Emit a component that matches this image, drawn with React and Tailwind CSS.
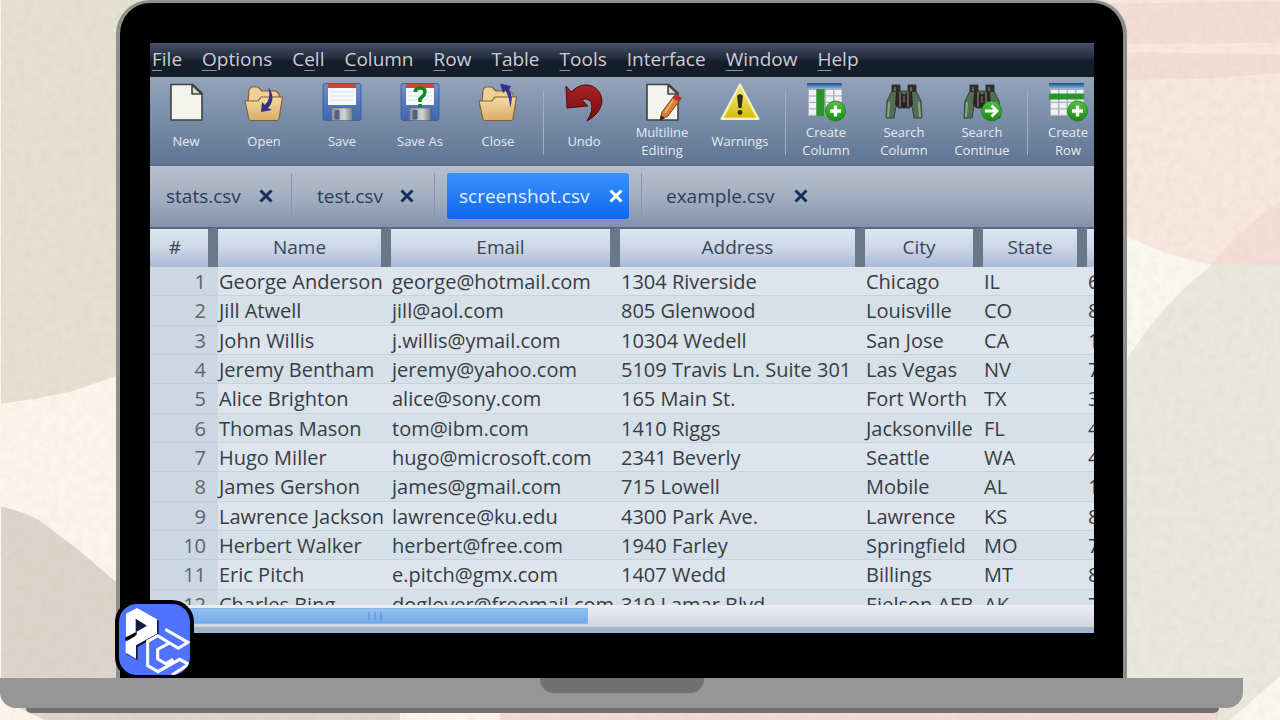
import React from "react";

const menu = [
  ["", "F", "ile"],
  ["", "O", "ptions"],
  ["C", "e", "ll"],
  ["", "C", "olumn"],
  ["", "R", "ow"],
  ["T", "a", "ble"],
  ["", "T", "ools"],
  ["", "I", "nterface"],
  ["", "W", "indow"],
  ["", "H", "elp"],
];

const rows = [
  ["George Anderson", "george@hotmail.com", "1304 Riverside", "Chicago", "IL", "6"],
  ["Jill Atwell", "jill@aol.com", "805 Glenwood", "Louisville", "CO", "8"],
  ["John Willis", "j.willis@ymail.com", "10304 Wedell", "San Jose", "CA", "1"],
  ["Jeremy Bentham", "jeremy@yahoo.com", "5109 Travis Ln. Suite 301", "Las Vegas", "NV", "7"],
  ["Alice Brighton", "alice@sony.com", "165 Main St.", "Fort Worth", "TX", "3"],
  ["Thomas Mason", "tom@ibm.com", "1410 Riggs", "Jacksonville", "FL", "4"],
  ["Hugo Miller", "hugo@microsoft.com", "2341 Beverly", "Seattle", "WA", "4"],
  ["James Gershon", "james@gmail.com", "715 Lowell", "Mobile", "AL", "1"],
  ["Lawrence Jackson", "lawrence@ku.edu", "4300 Park Ave.", "Lawrence", "KS", "8"],
  ["Herbert Walker", "herbert@free.com", "1940 Farley", "Springfield", "MO", "7"],
  ["Eric Pitch", "e.pitch@gmx.com", "1407 Wedd", "Billings", "MT", "8"],
  ["Charles Bing", "doglover@freemail.com", "319 Lamar Blvd", "Eielson AFB", "AK", "7"],
];

function Icon({ children }) {
  return (
    <svg viewBox="0 0 40 40" className="size-10 shrink-0" aria-hidden="true">
      {children}
    </svg>
  );
}

function Paper() {
  return (
    <>
      <path d="M5 1.500H27L36 10V37H5Z" fill="#f4f4ee" stroke="#3f423f" strokeWidth="1.6" strokeLinejoin="round" />
      <path d="M26 2V11H35.500Z" fill="#d5d8d3" stroke="#3f423f" strokeWidth="1.6" strokeLinejoin="round" />
    </>
  );
}

function Folder() {
  return (
    <>
      <path d="M4 19L5 7L7 4H14L18 8H32L35 11V20Z" fill="#efcf94" stroke="#80603a" strokeWidth="1.2" strokeLinejoin="round" />
      <path d="M1 18H14L17 14H38.500L35 36Q35 37.500 33 37.500H6.500Q5 37.500 4.800 36Z" fill="url(#folder)" stroke="#80603a" strokeWidth="1.2" strokeLinejoin="round" />
    </>
  );
}

function Floppy() {
  return (
    <>
      <rect x="1" y="0.500" width="38" height="37" rx="2" fill="url(#floppy)" stroke="#41619c" />
      <rect x="6" y="1" width="28" height="21" fill="#f7f8fb" />
      <rect x="6" y="1" width="28" height="4" fill="#c8473f" />
      <path d="M8 9H32M8 13H32M8 17H32" stroke="#dfe3ee" strokeWidth="1" />
      <rect x="9.500" y="25" width="21" height="12.500" fill="url(#metal)" stroke="#5e6878" strokeWidth="0.600" />
      <rect x="12.500" y="27" width="5" height="9.500" fill="#53627c" />
    </>
  );
}

function Binoculars() {
  return (
    <>
      <path d="M8 2H16V8H24V2H32V8L37 18L38 35H30L28 23L25 25H15L12 23L10 35H2L3 18L8 8Z" fill="#536f55" stroke="#31443a" strokeWidth="1" strokeLinejoin="round" />
      <path d="M8 2H16V9H8ZM24 2H32V9H24Z" fill="#302d2c" />
      <path d="M12 9H17L20 12L23 9H28L29 22L25 25H15L11 22Z" fill="#292625" />
      <path d="M16 9V24M24 9V24M11 4V8M27 4V8" stroke="#7c7973" strokeWidth="1.400" />
      <path d="M5 19L4 34M35 19L36 34" stroke="#8fa981" strokeWidth="2" />
      <path d="M19 13H21V20H19Z" fill="#55504d" />
    </>
  );
}

function Badge({ arrow }) {
  return (
    <>
      <circle cx="29.500" cy="28" r="10" fill="url(#green)" stroke="#1d7b16" strokeWidth="0.800" />
      {arrow ? (
        <path d="M23 28H35M29.500 22.500L35 28L29.500 33.500" fill="none" stroke="#fff" strokeWidth="2.800" />
      ) : (
        <path d="M29.500 22.500V33.500M24 28H35" stroke="#fff" strokeWidth="3.400" />
      )}
    </>
  );
}

function Grid({ row }) {
  return (
    <>
      <rect x="2" y="0" width="34" height="33" fill="#a9b2bd" />
      <rect x="1" y="0" width="35" height="5.500" fill="url(#gridHead)" />
      {[7, 13.5, 20, 26.5].map((y) =>
        [3, 11.5, 20, 28.5].map((x) => <rect key={x + "-" + y} x={x} y={y} width="7" height="5.300" fill="#f0f1f2" />)
      )}
      {row ? (
        <path d="M1 10.500H36V16.500H1Z" fill="#25952c" />
      ) : (
        <path d="M10.500 6H18.500V33H10.500Z" fill="#25952c" />
      )}
    </>
  );
}

const icons = {
  paper: <Paper />,
  open: (
    <>
      <Folder />
      <path d="M24 4Q33 15 24 25L28 27L17 29L18 19L21 22Q28 15 24 4Z" fill="#312f87" />
    </>
  ),
  save: <Floppy />,
  saveAs: (
    <>
      <Floppy />
      <path d="M15 9Q16 4 21 5Q27 6 24 12L20 16V19M20 21V24" fill="none" stroke="#12851c" strokeWidth="3.600" />
    </>
  ),
  close: (
    <>
      <Folder />
      <path d="M32 25Q36 13 31 7L33 3L22 0.500L25 10L27.500 7.500Q32 15 32 25Z" fill="#313391" />
    </>
  ),
  undo: (
    <path d="M2 3L7 9Q17 -1 28 3Q38 8 38 19Q36 31 23 38Q30 27 27 19Q23 14 18 17L24 23L3 25Z" fill="url(#red)" stroke="#55090c" strokeWidth="1" strokeLinejoin="round" />
  ),
  multi: (
    <>
      <Paper />
      <path d="M18 37L20 29L32 13L38 17L26 33Z" fill="#d98037" stroke="#774421" strokeWidth="1" />
      <path d="M31 15L33 11L40 15L37 19Z" fill="#b62c2c" />
      <path d="M18 38L19 32L23 35Z" fill="#34281f" />
      <path d="M31 17L23 30" stroke="#f2b06c" strokeWidth="1.500" />
    </>
  ),
  warn: (
    <>
      <path d="M20 1.500L38.500 36H1.500Z" fill="#eed735" stroke="#f3f0ca" strokeWidth="2" strokeLinejoin="round" />
      <path d="M20 5L35 34H5Z" fill="url(#yellow)" />
      <path d="M17 13Q20 9 23 13L21.500 25H18.500Z" fill="#302d16" />
      <circle cx="20" cy="29.500" r="2.400" fill="#302d16" />
    </>
  ),
  createColumn: (
    <>
      <Grid />
      <Badge />
    </>
  ),
  search: <Binoculars />,
  searchNext: (
    <>
      <Binoculars />
      <Badge arrow />
    </>
  ),
  createRow: (
    <>
      <Grid row />
      <Badge />
    </>
  ),
};

const tools = [
  ["paper", "New"],
  ["open", "Open"],
  ["save", "Save"],
  ["saveAs", "Save As"],
  ["close", "Close"],
  null,
  ["undo", "Undo"],
  ["multi", "Multiline Editing"],
  ["warn", "Warnings"],
  null,
  ["createColumn", "Create Column"],
  ["search", "Search Column"],
  ["searchNext", "Search Continue"],
  null,
  ["createRow", "Create Row"],
];

function Gradients() {
  const pairs = [
    ["folder", "#f5dba5", "#d9ad67"],
    ["floppy", "#6c8fc9", "#3f65ad"],
    ["green", "#54c43c", "#168a15"],
    ["gridHead", "#1d4f86", "#79b4dd"],
    ["red", "#a82326", "#74090d"],
    ["yellow", "#f4ea77", "#d5bd0e"],
  ];
  return (
    <svg className="absolute size-0" aria-hidden="true">
      <defs>
        {pairs.map(([id, from, to]) => (
          <linearGradient key={id} id={id} x2="0" y2="1">
            <stop stopColor={from} />
            <stop offset="1" stopColor={to} />
          </linearGradient>
        ))}
        <linearGradient id="metal">
          <stop stopColor="#8b919b" />
          <stop offset="0.600" stopColor="#d5d5d5" />
          <stop offset="1" stopColor="#777d86" />
        </linearGradient>
      </defs>
    </svg>
  );
}

function Backdrop() {
  return (
    <svg className="absolute inset-0 size-full" viewBox="0 0 1280 720" preserveAspectRatio="none" aria-hidden="true">
      <defs>
        <filter id="grain" x="0" y="0" width="1" height="1">
          <feTurbulence type="fractalNoise" baseFrequency="0.120" numOctaves="3" seed="4" />
          <feColorMatrix values="0 0 0 0 0.500  0 0 0 0 0.430  0 0 0 0 0.330  0.500 0 0 0 -0.170" />
        </filter>
      </defs>
      <rect width="1280" height="720" fill="#fbf8f2" />
      <path d="M1 0H640V300L117 376L70 392L35 399L1 404Z" fill="#e4e1d0" />
      <path d="M1 404L35 399L70 392L117 376L640 300V720H1Z" fill="#fdf5ec" />
      <path d="M1 507Q24 511 40 521L80 551L117 583L400 700V720H45L1 700Z" fill="#ddd5cb" />
      <path d="M1280 220Q1170 280 1120 372V720H1230L1280 676Z" fill="#e9e8dc" />
      <path d="M1000 0H1280V265H1212Q1160 254 1128 236L1000 180Z" fill="#f9e7e0" />
      <path d="M1280 202Q1245 225 1210 265H1280Z" fill="#f4dfd7" />
      <path d="M1100 4L1280 1V43L1100 44ZM1100 52L1280 54V73L1200 79L1100 80Z" fill="#f3ddd6" />
      <path d="M500 708H1218V720H500Z" fill="#f1dbd0" />
      <rect width="1280" height="720" filter="url(#grain)" opacity="0.400" />
    </svg>
  );
}

function Cross() {
  return (
    <svg viewBox="0 0 14 14" className="size-3.5" aria-hidden="true">
      <path d="M1.500 1.500L12.500 12.500M12.500 1.500L1.500 12.500" stroke="currentColor" strokeWidth="3" />
    </svg>
  );
}

const tabs = [
  ["stats.csv", "w-[142px] pl-4 pr-[18px] border-r"],
  ["test.csv", "w-[143px] pl-[25px] pr-5 border-r"],
  ["screenshot.csv", "w-[207px] px-3 border-r"],
  ["example.csv", "w-[166px] pl-6"],
];

function Tabs() {
  return (
    <div className="flex h-[61px] shrink-0 border-t border-[#c3ccdb] bg-linear-to-b from-[#b6bfce] via-[#a3afc1] to-[#8291ac] pb-2 pt-1.5 text-[19px]">
      {tabs.map(([name, style], i) => {
        const active = i === 2;
        return (
          <div key={name} className={`flex shrink-0 border-[#8795ab] ${style}`}>
            <div
              className={
                active
                  ? "flex flex-1 items-center justify-between rounded-[3px] bg-linear-to-b from-[#3990ff] to-[#0f68ee] pl-3 pr-1.5 text-[#e3efff]"
                  : "flex flex-1 items-center justify-between text-[#2c3d5c]"
              }
            >
              <button className="pt-px">{name}</button>
              <button aria-label={`Close ${name}`} className={active ? "text-white" : "text-[#142f5c]"}>
                <Cross />
              </button>
            </div>
          </div>
        );
      })}
    </div>
  );
}

function DataTable() {
  return (
    <div className="min-h-0 flex-1 overflow-hidden bg-[#dbe3eb]">
      <table className="h-[392px] w-full table-fixed border-separate border-spacing-0 text-[20px] leading-[26px] text-[#363d46]">
        <colgroup>
          <col className="w-[68px]" />
          <col className="w-[173px]" />
          <col className="w-[229px]" />
          <col className="w-[245px]" />
          <col className="w-[118px]" />
          <col className="w-[104px]" />
          <col />
        </colgroup>
        <thead>
          <tr className="h-10">
            {["#", "Name", "Email", "Address", "City", "State"].map((h) => (
              <th key={h} className="border-r-[10px] border-t-2 border-r-[#6b7789] border-t-[#56637a] bg-linear-to-b from-[#dde5f0] via-[#ccd7e7] to-[#a6b9d6] p-0 pb-0.5 text-[19px] font-normal text-[#3a4553] first:pr-2">
                {h}
              </th>
            ))}
            <th aria-label="Zip" className="border-t-2 border-t-[#56637a] bg-linear-to-b from-[#dde5f0] via-[#ccd7e7] to-[#a6b9d6] p-0" />
          </tr>
        </thead>
        <tbody>
          {rows.map((r, i) => (
            <tr key={r[0]} className="odd:bg-[#dde4ec] even:bg-[#d6e0e7]">
              <td className="border-b border-[#c5ced8] bg-[#cdd6e1] p-0 pr-3 pt-0.5 text-right text-[#5b6570]">{i + 1}</td>
              {r.map((c, j) => (
                <td key={j} className="whitespace-nowrap border-b border-[#c9d2da] p-0 pl-px pt-0.5">
                  {c}
                </td>
              ))}
            </tr>
          ))}
        </tbody>
      </table>
    </div>
  );
}

function Logo() {
  return (
    <div className="absolute -bottom-px -left-[5px] size-[79px] overflow-hidden rounded-[22px] border-4 border-black bg-[#4f73ff]">
      <svg viewBox="21 24 213 213" className="size-full" role="img" aria-label="PC logo">
        <path d="M46 59L79 41L140 74V118L77 153V193L44 175V59Z" fill="#101a45" />
        <path fillRule="evenodd" d="M42 53L75 36L135 70V113L72 148V188L41 170V137L72 119L42 122ZM71 68V109L105 89Z" fill="#fff" />
        <path d="M40 125L74 107V116L40 134Z" fill="#000" />
        <path d="M160 100L228 139L199 157L137 119L107 136V209L138 227L203 190L230 205L180 237M172 141L137 160V189L161 203L184 190" fill="none" stroke="#fff" strokeWidth="9" />
      </svg>
    </div>
  );
}

export default function App() {
  return (
    <div className="relative flex min-h-screen flex-col overflow-hidden font-['Open_Sans','Noto_Sans',sans-serif]">
      <Backdrop />
      <Gradients />
      <main className="relative ml-[116px] mr-[153px] flex flex-1 flex-col rounded-t-[34px] border-x-4 border-t-3 border-[#8f8f8c] bg-black pb-[45px] pl-[30px] pr-[29px] pt-10">
        <div className="flex h-[590px] flex-col overflow-hidden">
          <nav className="flex h-[34px] shrink-0 items-center gap-5 overflow-hidden bg-linear-to-b from-[#465269] from-0% via-[#222b3b] via-45% to-[#151c2a] to-55% pl-0.5 text-[19px] leading-6 text-[#c9ced6]">
            {menu.map(([a, b, c]) => (
              <button key={a + b + c} className="shrink-0 pb-0.5">
                {a}
                <span className="underline decoration-[#8c95a3] decoration-1 underline-offset-4">{b}</span>
                {c}
              </button>
            ))}
          </nav>
          <div className="flex h-[89px] shrink-0 overflow-hidden border-b border-[#536680] bg-linear-to-b from-[#94a4bb] via-[#788ca7] to-[#5f7591] pt-1.5">
            <div className="-ml-[3px] flex">
              {tools.map((t, i) =>
                t ? (
                  <button key={t[1]} className="flex w-[78px] shrink-0 flex-col items-center text-[13px] leading-[18px] text-[#e4eaf2]">
                    <Icon>{icons[t[0]]}</Icon>
                    <span className="flex h-9 w-16 items-center justify-center">{t[1]}</span>
                  </button>
                ) : (
                  <div key={i} className="ml-1.5 mr-px mt-2 h-16 w-px shrink-0 bg-[#a1afc2]" />
                )
              )}
            </div>
          </div>
          <Tabs />
          <DataTable />
          <div className="flex h-[22px] shrink-0 items-center bg-linear-to-b from-[#eceef2] to-[#d0d5de]">
            <div className="flex h-4 w-[438px] items-center justify-center gap-1 border border-[#8bb7e8] bg-linear-to-b from-[#91c0f2] to-[#73abe8] pl-3">
              <i className="h-2 w-0.5 bg-[#6c9fd8]" />
              <i className="h-2 w-0.5 bg-[#6c9fd8]" />
              <i className="h-2 w-0.5 bg-[#6c9fd8]" />
            </div>
          </div>
          <div className="h-1.5 shrink-0 bg-[#9fb6ce]" />
        </div>
        <Logo />
      </main>
      <div className="relative mr-[37px] flex h-[30px] justify-center rounded-b-[16px] bg-[#969696]">
        <div className="h-[15px] w-[164px] rounded-b-[14px] bg-[#727070]" />
      </div>
      <div className="relative mb-[7px] ml-[26px] mr-[61px] h-[5px] rounded-b-[5px] bg-[#727070]" />
    </div>
  );
}
